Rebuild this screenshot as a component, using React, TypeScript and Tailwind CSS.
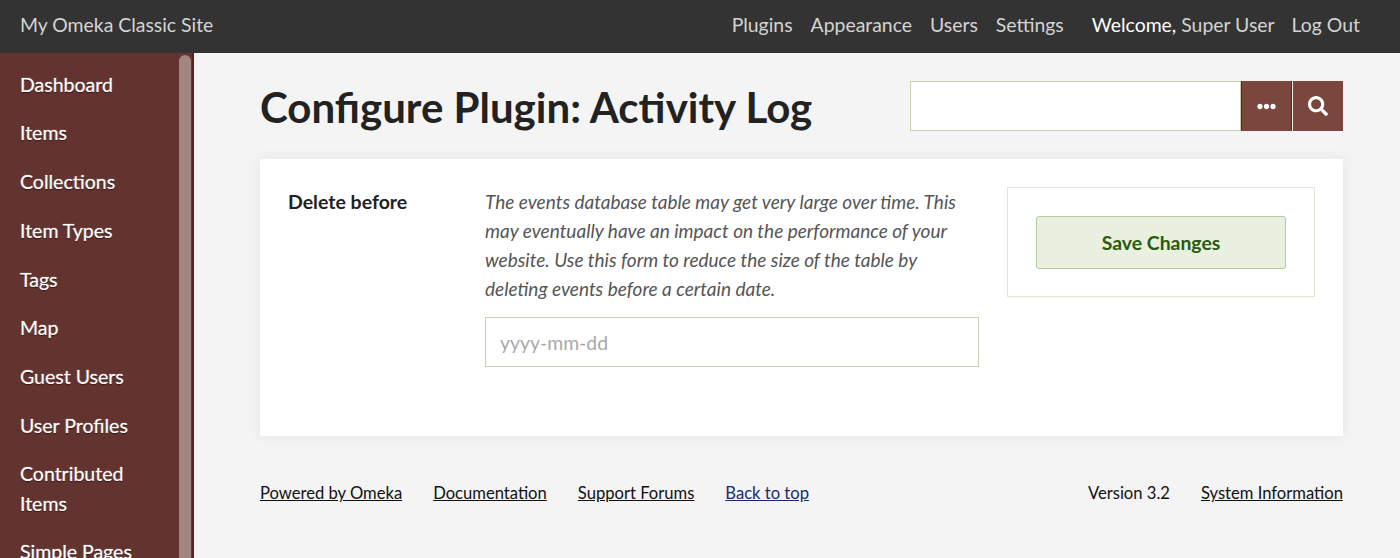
import React from "react";
import { FaEllipsisH, FaSearch } from "react-icons/fa";

const navItems = [
  "Dashboard",
  "Items",
  "Collections",
  "Item Types",
  "Tags",
  "Map",
  "Guest Users",
  "User Profiles",
  "Contributed Items",
  "Simple Pages",
];

const App = () => {
  return (
    <div className="h-[558px] overflow-hidden bg-[#f4f4f4] font-['Lato',sans-serif] text-[#222]">
      <header className="flex h-[53px] items-center justify-between bg-[#333333] pb-1 pl-5 pr-10 text-[19.4px] text-[#d4d4d4]">
        <a>My Omeka Classic Site</a>
        <nav className="flex items-center">
          <div className="flex gap-[18px]">
            <a>Plugins</a>
            <a>Appearance</a>
            <a>Users</a>
            <a>Settings</a>
          </div>
          <span className="ml-7 text-white">Welcome,</span>
          <a className="ml-[5px]">Super User</a>
          <a className="ml-[17px]">Log Out</a>
        </nav>
      </header>

      <div className="flex h-[505px]">
        <aside className="relative w-[194px] shrink-0 overflow-hidden border-r-2 border-[#5c1f1c] bg-[#63342f]">
          <ul className="w-[160px] pl-5 pt-[7px] text-[19.5px] leading-[29.2px] text-white [text-shadow:0_1px_1px_#3a0f0c,0_0_1px_#ffffff]">
            {navItems.map((item) => (
              <li key={item} className="py-[9.75px]">
                {item}
              </li>
            ))}
          </ul>
          <div className="absolute left-[179px] top-0.5 h-full w-3 rounded-t-md bg-[#a28581]" />
        </aside>

        <main className="flex-1 pl-[66px] pr-[57px]">
          <div className="flex h-[106px] items-start justify-between pt-[27px]">
            <h1 className="text-[42px] leading-[54px] font-bold text-[#222]">
              Configure Plugin: Activity Log
            </h1>
            <div className="mt-px flex">
              <input className="h-[50px] w-[331px] border border-[#cdd0b0] bg-white" />
              <button className="flex h-[50px] w-[51px] items-center justify-center border-x border-[#6e1a15] bg-[#7b463e] text-white">
                <FaEllipsisH size={19} />
              </button>
              <button className="ml-px flex h-[50px] w-[50px] items-center justify-center bg-[#7b463e] text-white">
                <FaSearch size={20} />
              </button>
            </div>
          </div>

          <section className="flex h-[277px] bg-white pl-7 pr-7 pt-7 shadow-[0_0_14px_rgba(0,0,0,0.07)]">
            <label className="w-[197px] shrink-0 text-[19.5px] leading-[29px] font-bold text-[#222]">
              Delete before
            </label>
            <div className="w-[494px] shrink-0">
              <p className="text-[19px] leading-[29px] text-[#555] italic">
                The events database table may get very large over time. This may eventually have an
                impact on the performance of your website. Use this form to reduce the size of the
                table by deleting events before a certain date.
              </p>
              <input
                className="mt-[14px] h-[50px] w-full border border-[#cdd0b0] bg-white px-[14px] text-[19.4px] placeholder:text-[#a8a8a8]"
                placeholder="yyyy-mm-dd"
              />
            </div>
            <div className="ml-7 h-[110px] w-[308px] shrink-0 border border-[#e2e4d8] px-7 pt-7">
              <button className="h-[53px] w-full rounded-[3px] border border-[#b5cb9c] bg-[#e9f0e0] text-[19.4px] font-bold text-[#2a5a0c]">
                Save Changes
              </button>
            </div>
          </section>

          <footer className="mt-[45px] flex justify-between text-[16.6px] leading-[24px] text-[#111]">
            <div className="flex gap-[31px]">
              <a className="underline">Powered by Omeka</a>
              <a className="underline">Documentation</a>
              <a className="underline">Support Forums</a>
              <a className="text-[#1a2a6e] underline">Back to top</a>
            </div>
            <div className="flex gap-[31px]">
              <span>Version 3.2</span>
              <a className="underline">System Information</a>
            </div>
          </footer>
        </main>
      </div>
    </div>
  );
};

export default App;
